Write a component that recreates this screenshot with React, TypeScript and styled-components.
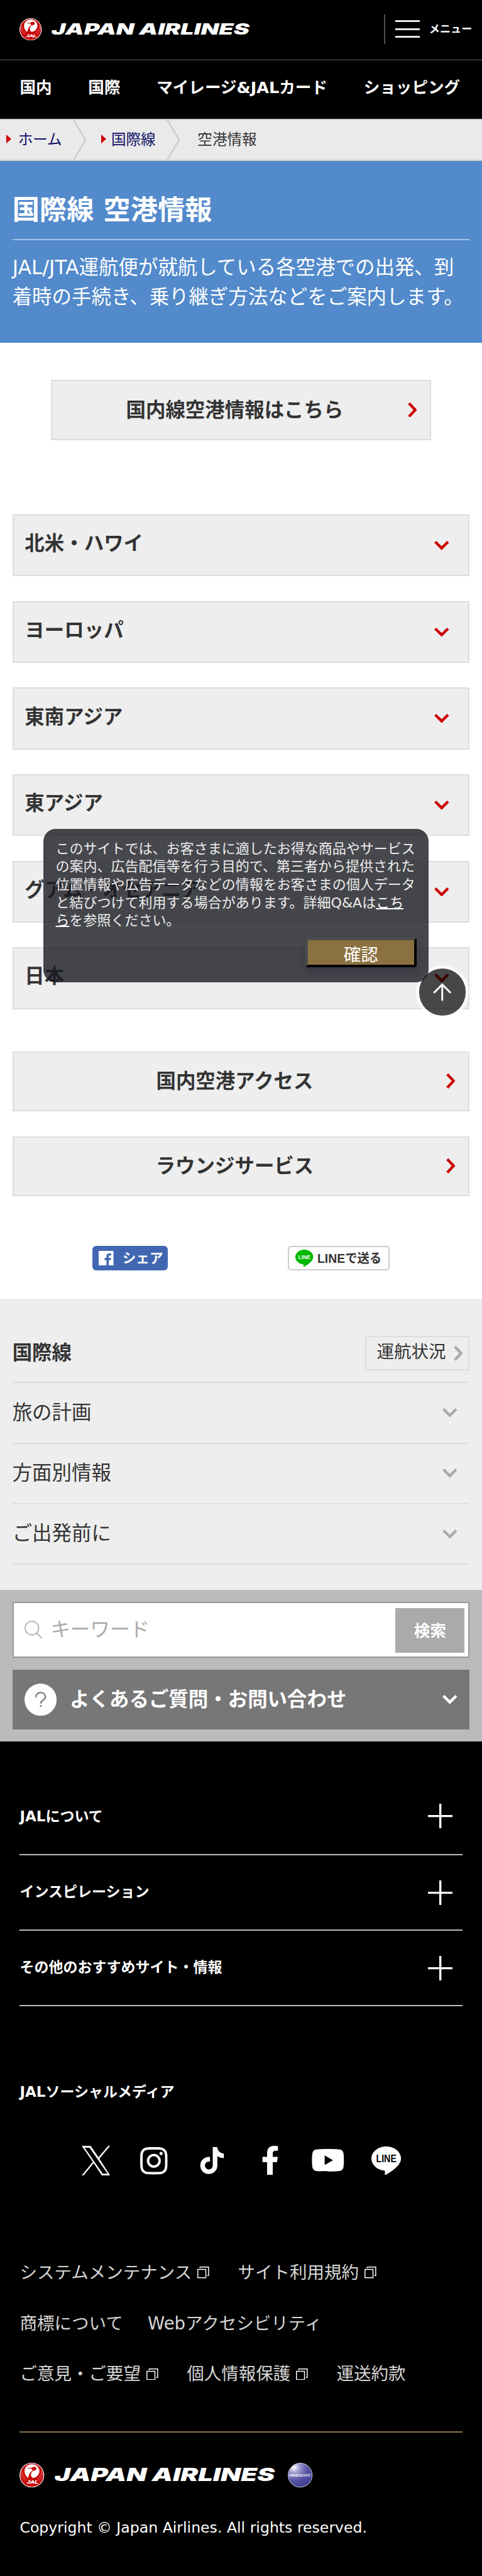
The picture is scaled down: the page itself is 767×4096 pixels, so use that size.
import React from 'react';
import styled, { createGlobalStyle } from 'styled-components';
import { FaFacebookF, FaInstagram, FaTiktok, FaYoutube } from 'react-icons/fa';

// 1rem = 10 layout units
const GlobalStyle = createGlobalStyle`
  *, *::before, *::after {
    box-sizing: border-box;
  }

  html {
    font-size: 19.6667px;
  }

  body {
    margin: 0;
    background: #000;
    color: #333;
    font-family: 'DejaVu Sans', 'Noto Sans CJK JP', sans-serif;
    font-size: 1.6rem;
    line-height: 1.5;
  }

  h1, h2, p, ul {
    margin: 0;
    padding: 0;
  }

  ul {
    list-style: none;
  }

  a {
    color: inherit;
    text-decoration: none;
  }

  svg {
    display: block;
    flex: none;
  }
`;

const Page = styled.div`
  position: relative;
  background: #fff;
  overflow: hidden;
`;

/* ---------- header ---------- */
const Header = styled.header`
  display: flex;
  align-items: center;
  justify-content: space-between;
  height: 4.9rem;
  padding: 0 0.8rem 0.1rem 1.6rem;
  border-bottom: 2px solid #333;
  background: #000;
`;

const LogoLink = styled.a<{ $gap: number }>`
  display: flex;
  align-items: center;
  gap: ${(p) => p.$gap}rem;
`;

const MenuButton = styled.button`
  display: flex;
  align-items: center;
  gap: 0.75rem;
  height: 2.4rem;
  padding: 0 0 0 0.8rem;
  border: 0;
  border-left: 2px solid #4d4d4d;
  background: none;
  color: #fff;
  font: bold 0.87rem/1 'DejaVu Sans', 'Noto Sans CJK JP', sans-serif;
`;

const Bars = styled.span`
  display: flex;
  flex-direction: column;
  justify-content: space-between;
  width: 2rem;
  height: 1.4rem;

  i {
    height: 3px;
    background: #e8e8e8;
  }
`;

const GlobalNav = styled.nav`
  display: flex;
  align-items: center;
  gap: 2.94rem;
  height: 4.7rem;
  padding: 0 1.6rem 0.3rem;
  background: #000;
  color: #fff;
  font-size: 1.3rem;
  font-weight: bold;
  white-space: nowrap;
`;

const Breadcrumb = styled.ul`
  display: flex;
  align-items: center;
  height: 3.4rem;
  padding-left: 0.5rem;
  border: solid #ccc;
  border-width: 2px 0;
  background: #eaeaea;
  font-size: 1.2rem;
  line-height: 3rem;

  li {
    display: flex;
    align-items: center;
  }
`;

const CrumbLink = styled.a<{ $gap: number }>`
  display: flex;
  align-items: center;
  gap: ${(p) => p.$gap}rem;
  margin-right: 0.87rem;
  color: #111166;

  &::before {
    content: '';
    margin-top: -0.15rem;
    border: solid transparent;
    border-width: 7px 0 7px 8px;
    border-left-color: #c00;
  }
`;

const CrumbArrow = styled.svg`
  width: 1.1rem;
  height: 3.2rem;
  margin-right: 1.2rem;
`;

const CurrentCrumb = styled.li`
  padding-left: 0.22rem;
`;

/* ---------- hero ---------- */
const Hero = styled.section`
  height: 14.7rem;
  padding: 2.38rem 1rem 0;
  background: #528acb;
  color: #fff;

  h1 {
    padding-bottom: 0.62rem;
    border-bottom: 2px solid #a3c1e3;
    font-size: 2.2rem;
    line-height: 1.5;
  }

  p {
    padding-top: 1.02rem;
  }
`;

/* ---------- main ---------- */
const Main = styled.main`
  padding: 3rem 1rem 2.3rem;
`;

const LinkBox = styled.a<{ $narrow?: boolean }>`
  display: flex;
  align-items: center;
  height: ${(p) => (p.$narrow ? 4.9 : 4.85)}rem;
  margin: ${(p) => (p.$narrow ? '0 3.1rem' : '0')};
  padding: 0 1.07rem 0.05rem 0.8rem;
  border: 2px solid #ddd;
  background: #eee;
  font-weight: bold;

  span {
    flex: 1;
    padding-top: 0.07rem;
    text-align: center;
  }
`;

const LinkStack = styled.div`
  display: grid;
  gap: 2.03rem;
  margin-top: 3.4rem;
`;

const AreaList = styled.ul`
  display: grid;
  gap: 2rem;
  margin-top: 6rem;
`;

const AreaRow = styled.li`
  display: flex;
  align-items: center;
  justify-content: space-between;
  height: 5rem;
  padding: 0 1.55rem 0 0.9rem;
  border: 2px solid #ddd;
  background: #eee;
  font-weight: bold;

  span {
    padding-bottom: 0.25rem;
  }
`;

const ShareRow = styled.div`
  display: flex;
  justify-content: space-between;
  margin-top: 4rem;
  padding: 0 6.5rem;
`;

const FacebookShare = styled.a`
  display: flex;
  align-items: center;
  gap: 0.7rem;
  width: 6.1rem;
  height: 2rem;
  padding-left: 0.5rem;
  border-radius: 0.3rem;
  background: #4267b2;
  color: #fff;
  font-size: 1.1rem;
  font-weight: bold;
  line-height: 1;
`;

const LineShare = styled.a`
  display: flex;
  align-items: center;
  gap: 0.35rem;
  width: 8.2rem;
  height: 2rem;
  padding-left: 0.5rem;
  border: 2px solid #ccc;
  border-radius: 0.25rem;
  background: #fff;
`;

const LineLabel = styled.svg`
  width: 5.3rem;
  height: 1.6rem;
  overflow: visible;
`;

/* ---------- local navigation ---------- */
const LocalNav = styled.section`
  height: 23.5rem;
  padding: 2.2rem 1rem 0;
  background: #eee;
`;

const LocalHead = styled.div`
  display: flex;
  align-items: flex-start;
  justify-content: space-between;
  height: 4.6rem;
  padding-top: 0.8rem;
  border-bottom: 2px solid #ddd;

  h2 {
    padding-top: 0.16rem;
    font-size: 1.6rem;
  }
`;

const StatusLink = styled.a`
  display: flex;
  align-items: center;
  gap: 0.65rem;
  height: 2.8rem;
  padding: 0 0.42rem 0 0.82rem;
  border: 2px solid #ddd;
  font-size: 1.4rem;

  span {
    padding-bottom: 0.28rem;
  }
`;

const LocalRow = styled.li`
  display: flex;
  align-items: center;
  justify-content: space-between;
  height: 4.9rem;
  padding-right: 1rem;
  border-bottom: 2px solid #ddd;
`;

/* ---------- search / faq ---------- */
const SupportArea = styled.section`
  display: grid;
  gap: 1rem;
  padding: 1rem;
  background: #bbb;
`;

const SearchBox = styled.div`
  display: flex;
  align-items: center;
  height: 4.5rem;
  padding: 0 0.3rem 0 0.9rem;
  border: 2px solid #999;
  background: #fff;
  color: #aaa;

  span {
    flex: 1;
    padding: 0.02rem 0 0 0.65rem;
  }
`;

const SearchButton = styled.button`
  width: 5.6rem;
  height: 3.6rem;
  margin-top: 0.1rem;
  padding: 0.05rem 0 0;
  border: 0;
  background: #aaa;
  color: #fff;
  font: bold 1.3rem/1.5 'DejaVu Sans', 'Noto Sans CJK JP', sans-serif;
`;

const FaqBar = styled.div`
  display: flex;
  align-items: center;
  height: 4.8rem;
  padding: 0 1rem;
  background: #777;
  color: #fff;
  font-weight: bold;

  span {
    flex: 1;
    padding: 0.02rem 0 0 1.05rem;
  }
`;

/* ---------- footer ---------- */
const Footer = styled.footer`
  padding: 3.1rem 1.6rem 3.15rem;
  background: #000;
  color: #fff;
`;

const FooterRow = styled.li`
  display: flex;
  align-items: center;
  justify-content: space-between;
  height: 6.1rem;
  padding-right: 0.8rem;
  border-bottom: 2px solid #bbb;
  font-size: 1.17rem;
  font-weight: bold;

  span {
    padding-bottom: 0.12rem;
  }

  &:first-child svg {
    margin-bottom: 0.2rem;
  }
`;

const SocialTitle = styled.h2`
  margin-top: 6.06rem;
  font-size: 1.17rem;
  line-height: 1.8rem;
`;

const SocialList = styled.ul`
  display: flex;
  justify-content: center;
  height: 2.6rem;
  margin-top: 3.3rem;

  li {
    display: flex;
    align-items: center;
    justify-content: center;
    width: 4.7rem;
  }
`;

const PolicyLinks = styled.div`
  margin-top: 5.72rem;
  color: #d6d6d6;
  font-size: 1.4rem;
`;

const PolicyRow = styled.div`
  display: flex;
  align-items: center;
  gap: 2rem;
  height: 4.1rem;
`;

const PolicyLink = styled.a`
  display: flex;
  align-items: center;

  svg {
    margin: 0 0.32rem 0 0.45rem;
  }
`;

const FooterLogos = styled.div`
  display: flex;
  align-items: center;
  gap: 1rem;
  margin-top: 2.6rem;
  padding-top: 2.4rem;
  border-top: 2px solid #8c7250;
`;

const Copyright = styled.p`
  margin-top: 2.32rem;
  font-size: 1.2rem;
  line-height: 2rem;
`;

/* ---------- overlays ---------- */
const CookieNotice = styled.aside`
  position: absolute;
  z-index: 2;
  top: 67rem;
  left: 3.5rem;
  width: 31.2rem;
  height: 12.4rem;
  padding: 0.92rem 1rem 0;
  border-radius: 1rem;
  background: rgba(25, 26, 32, 0.8);
  color: #ededed;
  font-size: 1.12rem;
  line-height: 1.3;

  a {
    color: #fff;
    text-decoration: underline;
    text-decoration-thickness: 2px;
  }
`;

const ConfirmButton = styled.button`
  display: block;
  width: 9rem;
  height: 2.4rem;
  margin: 0.6rem 0 0 auto;
  padding: 0.2rem 0 0;
  border: 4px solid;
  border-color: #4d4d4d #000 #000 #4d4d4d;
  border-radius: 0.2rem;
  background: #8c7140;
  box-shadow: 0 0.3rem 0.6rem rgba(50, 50, 65, 0.7);
  color: #fff;
  font: 1.4rem/1.4 'DejaVu Sans', 'Noto Sans CJK JP', sans-serif;
`;

const PageTop = styled.a`
  position: absolute;
  z-index: 1;
  top: 78.3rem;
  left: 33.9rem;
  display: flex;
  align-items: center;
  justify-content: center;
  width: 3.8rem;
  height: 3.8rem;
  border-radius: 50%;
  background: rgba(0, 0, 0, 0.7);
  box-shadow: 0 0 0.1rem 0.25rem rgba(255, 255, 255, 0.75);
`;

/* ---------- icons ---------- */
const ChevronRight = ({ color = '#c00' }: { color?: string }) => (
  <svg viewBox="0 0 7.5 12" style={{ width: '0.75rem', height: '1.2rem' }}>
    <path d="M0.9 0.6L6 6L0.9 11.4" fill="none" stroke={color} strokeWidth="2.2" />
  </svg>
);

const ChevronDown = ({ color }: { color: string }) => (
  <svg viewBox="0 0 12 7.5" style={{ width: '1.2rem', height: '0.75rem' }}>
    <path d="M0.8 0.8L6 5.9L11.2 0.8" fill="none" stroke={color} strokeWidth="2.2" />
  </svg>
);

const PlusIcon = () => (
  <svg viewBox="0 0 20 20" style={{ width: '2rem', height: '2rem' }}>
    <path d="M10 0V20M0 10H20" stroke="#fff" strokeWidth="1.7" />
  </svg>
);

const WindowIcon = () => (
  <svg viewBox="0 0 9.5 9.5" style={{ width: '0.95rem', height: '0.95rem' }}>
    <path d="M0.4 2.3H6.9V9H0.4zM2.2 1.3V0.4H9.1V7.2H8" fill="none" stroke="#fff" strokeWidth="0.75" />
  </svg>
);

const Crane = ({ size }: { size: number }) => (
  <svg viewBox="0 0 180 180" style={{ width: `${size}rem`, height: `${size}rem` }}>
    <circle cx="90" cy="90" r="90" fill="#fff" />
    <circle cx="90" cy="90" r="85" fill="#c80000" />
    <path
      d="M90 10C60 10 37 33 37 62C37 86 50 102 68 115L90 112L109 110C132 100 145 82 145 60C145 32 120 10 90 10z"
      fill="#fff"
    />
    <path
      d="M50 38L92 36C98 29 108 28 116 31C125 35 126 44 121 50C115 57 101 55 94 62C84 73 80 88 88 102C94 110 102 112 116 108L128 122L58 126C64 106 68 90 75 76C82 65 95 58 94 49C92 43 85 42 78 42z"
      fill="#c80000"
    />
    <path
      d="M8 72C10 100 24 118 44 130M16 54C18 84 30 104 50 118M172 72C170 100 156 118 136 130M164 54C162 84 150 104 130 118"
      fill="none"
      stroke="#fff"
      strokeWidth="2.5"
    />
    <text
      x="53"
      y="152"
      fill="#fff"
      fontFamily="Liberation Sans"
      fontWeight="bold"
      fontStyle="italic"
      fontSize="31"
      textLength="86"
      lengthAdjust="spacingAndGlyphs"
      stroke="#fff"
      strokeWidth="1.5"
    >
      JAL
    </text>
  </svg>
);

const Wordmark = ({ width, height }: { width: number; height: number }) => (
  <svg
    viewBox="0 0 178 12"
    preserveAspectRatio="none"
    style={{ width: `${width}rem`, height: `${height}rem`, overflow: 'visible' }}
  >
    <text
      x="-0.5"
      y="11.3"
      fill="#fff"
      fontFamily="Inter"
      fontWeight="900"
      fontStyle="italic"
      fontSize="14.8"
      textLength="178"
      lengthAdjust="spacingAndGlyphs"
    >
      JAPAN AIRLINES
    </text>
  </svg>
);

const Oneworld = () => (
  <svg viewBox="0 0 40 40" style={{ width: '2rem', height: '2rem' }}>
    <defs>
      <radialGradient id="globe" cx="0.25" cy="0.18" r="0.85">
        <stop offset="0" stopColor="#fff" />
        <stop offset="0.28" stopColor="#9a98cc" />
        <stop offset="0.65" stopColor="#5552a4" />
        <stop offset="1" stopColor="#403d94" />
      </radialGradient>
    </defs>
    <circle cx="20" cy="20" r="19.4" fill="url(#globe)" stroke="#d5d5ea" strokeWidth="1" />
    <text x="2.5" y="22" fill="#fff" fontFamily="Liberation Sans" fontSize="7.6" textLength="34" lengthAdjust="spacingAndGlyphs">
      <tspan fontWeight="bold">one</tspan>world
    </text>
  </svg>
);

const XLogo = () => (
  <svg viewBox="0 0 23 24" style={{ width: '2.3rem', height: '2.4rem' }}>
    <path
      fillRule="evenodd"
      fill="#fff"
      d="M0 0H7.2L13.6 9.3L21.5 0H23L14.3 10.4L23 24H16.3L9.7 14L1.5 24H0L9 13zM2.4 1.5L17 22.5H20.9L6.4 1.5z"
    />
  </svg>
);

const LineBalloon = ({ width, fill, color }: { width: number; fill: string; color: string }) => (
  <svg viewBox="0 0 24 23" style={{ width: `${width}rem`, height: `${(width * 23) / 24}rem` }}>
    <path
      fill={fill}
      d="M12 0C5.4 0 0 4.4 0 9.8C0 14.7 4.3 18.7 10.1 19.5C11 19.7 11.1 20.2 11 21L10.8 22.2C10.7 22.9 11.2 23.2 11.9 22.8C15 21 24 15.6 24 9.8C24 4.4 18.6 0 12 0z"
    />
    <text
      x="3.8"
      y="12.8"
      fill={color}
      fontFamily="Liberation Sans"
      fontWeight="bold"
      fontSize="8"
      textLength="16.5"
      lengthAdjust="spacingAndGlyphs"
    >
      LINE
    </text>
  </svg>
);

const FacebookBox = () => (
  <svg viewBox="0 0 12 12" style={{ width: '1.2rem', height: '1.2rem' }}>
    <rect width="12" height="12" rx="0.7" fill="#fff" />
    <path d="M8.2 12V7.5H9.8L10 5.7H8.2V4.6C8.2 4 8.4 3.7 9.1 3.7H10.1V2.1C9.9 2 9.3 2 8.7 2C7.2 2 6.3 2.9 6.3 4.4V5.7H4.8V7.5H6.3V12z" fill="#4267b2" />
  </svg>
);

const SearchIcon = () => (
  <svg viewBox="0 0 14.5 14.5" style={{ width: '1.45rem', height: '1.45rem' }}>
    <circle cx="6" cy="6" r="5.5" fill="none" stroke="#aaa" strokeWidth="0.8" />
    <path d="M9.8 10L14 14.2" stroke="#aaa" strokeWidth="0.9" />
  </svg>
);

const QuestionIcon = () => (
  <svg viewBox="0 0 26 26" style={{ width: '2.6rem', height: '2.6rem' }}>
    <circle cx="13" cy="13" r="13" fill="#fff" />
    <path d="M9.2 11.2C9.2 8.6 10.7 7.3 13 7.3C15.4 7.3 16.9 8.7 16.9 10.7C16.9 13.6 13.1 13.3 13.1 16.2" fill="none" stroke="#777" strokeWidth="1.1" />
    <circle cx="13.1" cy="18.2" r="0.75" fill="#777" />
  </svg>
);

const areas = ['北米・ハワイ', 'ヨーロッパ', '東南アジア', '東アジア', 'グアム・オセアニア', '日本'];
const localMenus = ['旅の計画', '方面別情報', 'ご出発前に'];
const footerMenus = ['JALについて', 'インスピレーション', 'その他のおすすめサイト・情報'];
const crumbs = [
  { label: 'ホーム', gap: 0.55 },
  { label: '国際線', gap: 0.4 },
];
const policies = [
  [
    { label: 'システムメンテナンス', blank: true },
    { label: 'サイト利用規約', blank: true },
  ],
  [
    { label: '商標について', blank: false },
    { label: 'Webアクセシビリティ', blank: false },
  ],
  [
    { label: 'ご意見・ご要望', blank: true },
    { label: '個人情報保護', blank: true },
    { label: '運送約款', blank: false },
  ],
];

export default function App() {
  return (
    <>
      <GlobalStyle />
      <Page>
        <Header>
          <LogoLink href="#" $gap={0.8}>
            <Crane size={1.8} />
            <Wordmark width={16} height={1.02} />
          </LogoLink>
          <MenuButton type="button">
            <Bars>
              <i />
              <i />
              <i />
            </Bars>
            メニュー
          </MenuButton>
        </Header>
        <GlobalNav>
          <a href="#">国内</a>
          <a href="#">国際</a>
          <a href="#">マイレージ&amp;JALカード</a>
          <a href="#">ショッピング</a>
        </GlobalNav>
        <Breadcrumb>
          {crumbs.map((crumb) => (
            <li key={crumb.label}>
              <CrumbLink href="#" $gap={crumb.gap}>{crumb.label}</CrumbLink>
              <CrumbArrow viewBox="0 0 11 32">
                <path d="M0.7 0L10.2 16L0.7 32" fill="none" stroke="#ccc" strokeWidth="1.3" />
              </CrumbArrow>
            </li>
          ))}
          <CurrentCrumb>空港情報</CurrentCrumb>
        </Breadcrumb>

        <Hero>
          <h1>国際線 空港情報</h1>
          <p>JAL/JTA運航便が就航している各空港での出発、到着時の手続き、乗り継ぎ方法などをご案内します。</p>
        </Hero>

        <Main>
          <LinkBox href="#" $narrow>
            <span>国内線空港情報はこちら</span>
            <ChevronRight />
          </LinkBox>
          <AreaList>
            {areas.map((area) => (
              <AreaRow key={area}>
                <span>{area}</span>
                <ChevronDown color="#c00" />
              </AreaRow>
            ))}
          </AreaList>
          <LinkStack>
            <LinkBox href="#">
              <span>国内空港アクセス</span>
              <ChevronRight />
            </LinkBox>
            <LinkBox href="#">
              <span>ラウンジサービス</span>
              <ChevronRight />
            </LinkBox>
          </LinkStack>
          <ShareRow>
            <FacebookShare href="#">
              <FacebookBox />
              シェア
            </FacebookShare>
            <LineShare href="#">
              <LineBalloon width={1.45} fill="#00b900" color="#fff" />
              <LineLabel viewBox="0 0 53 16">
                <text
                  x="0"
                  y="11.8"
                  fill="#333"
                  fontFamily="Liberation Sans, Noto Sans CJK JP, sans-serif"
                  fontWeight="bold"
                  fontSize="10.4"
                  textLength="52"
                  lengthAdjust="spacingAndGlyphs"
                >
                  LINEで送る
                </text>
              </LineLabel>
            </LineShare>
          </ShareRow>
        </Main>

        <LocalNav>
          <LocalHead>
            <h2>国際線</h2>
            <StatusLink href="#">
              <span>運航状況</span>
              <ChevronRight color="#aaa" />
            </StatusLink>
          </LocalHead>
          <ul>
            {localMenus.map((menu) => (
              <LocalRow key={menu}>
                <span>{menu}</span>
                <ChevronDown color="#aaa" />
              </LocalRow>
            ))}
          </ul>
        </LocalNav>

        <SupportArea>
          <SearchBox>
            <SearchIcon />
            <span>キーワード</span>
            <SearchButton type="button">検索</SearchButton>
          </SearchBox>
          <FaqBar>
            <QuestionIcon />
            <span>よくあるご質問・お問い合わせ</span>
            <ChevronDown color="#fff" />
          </FaqBar>
        </SupportArea>

        <Footer>
          <ul>
            {footerMenus.map((menu) => (
              <FooterRow key={menu}>
                <span>{menu}</span>
                <PlusIcon />
              </FooterRow>
            ))}
          </ul>
          <SocialTitle>JALソーシャルメディア</SocialTitle>
          <SocialList>
            <li><XLogo /></li>
            <li><FaInstagram size="2.52rem" /></li>
            <li><FaTiktok size="2.18rem" /></li>
            <li><FaFacebookF size="2.34rem" /></li>
            <li><FaYoutube size="2.73rem" /></li>
            <li><LineBalloon width={2.4} fill="#fff" color="#000" /></li>
          </SocialList>
          <PolicyLinks>
            {policies.map((row) => (
              <PolicyRow key={row[0].label}>
                {row.map((item) => (
                  <PolicyLink href="#" key={item.label}>
                    {item.label}
                    {item.blank && <WindowIcon />}
                  </PolicyLink>
                ))}
              </PolicyRow>
            ))}
          </PolicyLinks>
          <FooterLogos>
            <LogoLink href="#" $gap={0.9}>
              <Crane size={2} />
              <Wordmark width={17.8} height={1.2} />
            </LogoLink>
            <Oneworld />
          </FooterLogos>
          <Copyright>Copyright © Japan Airlines. All rights reserved.</Copyright>
        </Footer>

        <PageTop href="#">
          <svg viewBox="0 0 16 15" style={{ width: '1.6rem', height: '1.5rem' }}>
            <path d="M8 1V14.4M1.2 8L8 1.2L14.8 8" fill="none" stroke="#fff" strokeWidth="1.5" />
          </svg>
        </PageTop>
        <CookieNotice>
          このサイトでは、お客さまに適したお得な商品やサービスの案内、広告配信等を行う目的で、第三者から提供された位置情報や広告データなどの情報をお客さまの個人データと結びつけて利用する場合があります。詳細Q&amp;Aは<a href="#">こちら</a>を参照ください。
          <ConfirmButton type="button">確認</ConfirmButton>
        </CookieNotice>
      </Page>
    </>
  );
}
